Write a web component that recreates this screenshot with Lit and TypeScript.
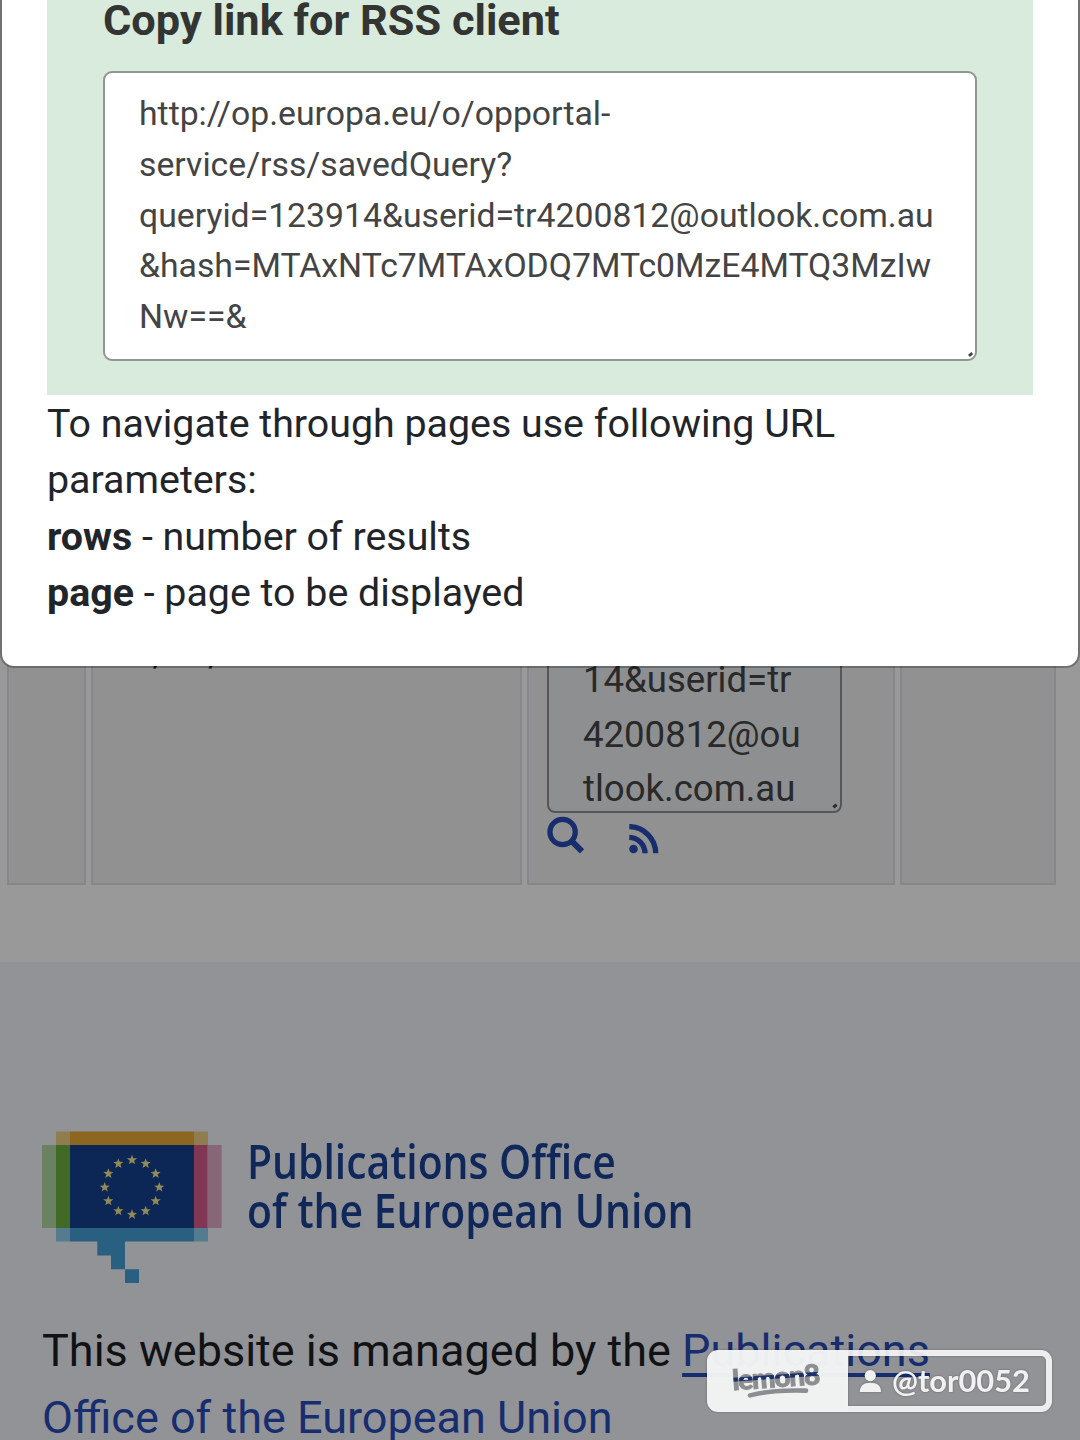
import { LitElement, html, svg, css } from "lit";
import { customElement } from "lit/decorators.js";

@customElement("rss-modal")
export class RssModal extends LitElement {
  static styles = css`
    :host {
      display: block;
      box-sizing: border-box;
      height: 667.5px;
      border: 2px solid rgba(0, 0, 0, 0.26);
      border-top: 0;
      border-radius: 0 0 14px 14px;
      background: #fff;
      background-clip: padding-box;
      color: #212529;
      padding: 0 45px;
      font: 39.36px/56.4px Roboto, sans-serif;
    }
    .panel {
      box-sizing: border-box;
      height: 396px;
      background: linear-gradient(#d9ebdc 395.3px, transparent 395.3px);
      padding: 0 56px;
    }
    .title {
      margin: 0;
      height: 71.4px;
      box-sizing: border-box;
      font-size: 43.3px;
      line-height: 42px;
      font-weight: 700;
      color: #333533;
    }
    .field {
      box-sizing: border-box;
      position: relative;
      height: 290px;
      border: 2px solid #8f9691;
      border-radius: 9px;
      background: #fff;
      padding: 16.1px 34px;
      font-size: 33.75px;
      line-height: 50.6px;
      color: #444;
      white-space: nowrap;
    }
    .grip {
      position: absolute;
      right: 1px;
      bottom: 2px;
      width: 6px;
      height: 5px;
      display: block;
    }
    b { font-weight: 700; }
  `;
  render() {
    return html`
      <div class="panel">
        <h2 class="title">Copy link for RSS client</h2>
        <div class="field">
          <div>http://op.europa.eu/o/opportal-</div>
          <div>service/rss/savedQuery?</div>
          <div>queryid=123914&amp;userid=tr4200812@outlook.com.au</div>
          <div>&amp;hash=MTAxNTc7MTAxODQ7MTc0MzE4MTQ3MzIw</div>
          <div>Nw==&amp;</div>
          <svg class="grip" viewBox="0 0 6 5"><path d="M0.9 3.8L4.3 1.2" stroke="#444" stroke-width="2.8" /></svg>
        </div>
      </div>
      <div>To navigate through pages use following URL<br />parameters:</div>
      <div><b>rows</b> - number of results</div>
      <div><b>page</b> - page to be displayed</div>
    `;
  }
}

@customElement("query-table")
export class QueryTable extends LitElement {
  static styles = css`
    :host {
      display: grid;
      grid-template-columns: 79px 431px 368px 156px;
      column-gap: 5px;
      height: 885px;
      padding-left: 7px;
      box-sizing: border-box;
      font-family: Roboto, sans-serif;
    }
    .cell {
      box-sizing: border-box;
      border: 2px solid #85878a;
      background: #919191;
      display: flex;
      flex-direction: column;
      justify-content: flex-end;
    }
    .date {
      padding: 0 0 202px 19px;
      font-size: 36.2px;
      line-height: 54px;
      color: #111;
      white-space: nowrap;
    }
    .actions-cell { padding: 0 0 28px 18px; }
    .field {
      box-sizing: border-box;
      position: relative;
      width: 295px;
      height: 260px;
      border: 2px solid #555657;
      border-radius: 8px;
      background: #8d8f91;
      padding: 0 34px;
      display: flex;
      flex-direction: column;
      justify-content: flex-end;
      font-size: 36.55px;
      line-height: 54.4px;
      color: #292929;
    }
    .last { margin-bottom: -5.4px; }
    .grip {
      position: absolute;
      right: 2px;
      bottom: 2px;
      width: 6px;
      height: 6px;
    }
    .icons {
      display: flex;
      gap: 44px;
      height: 42px;
      box-sizing: border-box;
      padding-top: 3px;
    }
    .search { width: 38px; height: 38px; }
    .rss { width: 30px; height: 30px; margin-top: 8px; }
  `;
  render() {
    return html`
      <div class="cell"></div>
      <div class="cell"><div class="date">25/06/2025 10:34</div></div>
      <div class="cell actions-cell">
        <div class="field">
          <div>14&amp;userid=tr</div>
          <div>4200812@ou</div>
          <div class="last">tlook.com.au</div>
          <svg class="grip" viewBox="0 0 6 6"><path d="M1.4 4.4L4.6 1.6" stroke="#2c2c2c" stroke-width="3.2" /></svg>
        </div>
        <div class="icons">
          <svg class="search" viewBox="0 0 38 38" fill="none" stroke="#172d6d">
            <circle cx="15.6" cy="16" r="12.7" stroke-width="5.2" />
            <path d="M24 24.4L35 35.4" stroke-width="6" />
          </svg>
          <svg class="rss" viewBox="0 0 30 30" fill="none" stroke="#172d6d" stroke-width="5">
            <circle cx="4.5" cy="25" r="4.3" fill="#172d6d" stroke="none" />
            <path d="M0.3 13.3A16 16 0 0 1 16 29.3" stroke-width="5.3" />
            <path d="M0.3 2.6A26.7 26.7 0 0 1 26.7 29.3" stroke-width="5.3" />
          </svg>
        </div>
      </div>
      <div class="cell"></div>
    `;
  }
}

const starPoints = (cx: number, cy: number, r: number): string =>
  Array.from({ length: 10 }, (_, i) => {
    const radius = i % 2 ? r * 0.42 : r;
    const a = (Math.PI / 5) * i - Math.PI / 2;
    return `${(cx + radius * Math.cos(a)).toFixed(2)},${(cy + radius * Math.sin(a)).toFixed(2)}`;
  }).join(" ");

@customElement("site-footer")
export class SiteFooter extends LitElement {
  static styles = css`
    :host {
      display: block;
      height: 478px;
      box-sizing: border-box;
      background: #929397;
      padding: 169px 42px 0;
      font-family: Roboto, sans-serif;
    }
    .brand { display: flex; gap: 25px; height: 152px; }
    .emblem { width: 180px; height: 152px; flex: none; }
    .name {
      padding-top: 6px;
      font: 600 46.4px/49.4px "Open Sans", "Noto Sans", sans-serif;
      color: #10275a;
      white-space: nowrap;
      transform: scaleX(0.882);
      transform-origin: 0 0;
    }
    .line { display: block; }
    .first { letter-spacing: -0.05px; }
    .text {
      margin: 34px 0 0;
      font-size: 45px;
      line-height: 67px;
      color: #101214;
      white-space: nowrap;
    }
    .text a {
      color: #172d6d;
      text-decoration: underline;
      text-decoration-thickness: 4px;
      text-underline-offset: 7px;
      text-decoration-skip-ink: none;
    }
  `;
  render() {
    const stars = Array.from({ length: 12 }, (_, i) => {
      const a = (Math.PI / 6) * i;
      return svg`<polygon points=${starPoints(90 + 27.3 * Math.sin(a), 56.3 - 27.3 * Math.cos(a), 5.3)} fill="#928b55" />`;
    });
    return html`
      <div class="brand">
        <svg class="emblem" viewBox="0 0 180 152">
          <path d="M14 0.4H28V14H14zM152 0.4H166V14H152z" fill="#8f7d50" />
          <path d="M28 0.4H152V14H28z" fill="#8d6620" />
          <path d="M0 14H14V97H0z" fill="#6a8261" />
          <path d="M14 14H28V97H14z" fill="#426a27" />
          <path d="M28 14H152V97H28z" fill="#0c2655" />
          <path d="M152 14H165.7V97H152z" fill="#813654" />
          <path d="M165.7 14H179.6V97H165.7z" fill="#876678" />
          <path d="M14 97H28V110.6H14zM152 97H166V110.6H152z" fill="#547b8e" />
          <path d="M28 97H152V110.6H83V138.2H69V124.4H55.3V110.6H28zM83 138.2H97V152H83z" fill="#295f80" />
          ${stars}
        </svg>
        <div class="name">
          <span class="line first">Publications Office</span>
          <span class="line">of the European Union</span>
        </div>
      </div>
      <p class="text">
        This website is managed by the <a>Publications<br />Office of the European Union</a>
      </p>
    `;
  }
}

@customElement("author-badge")
export class AuthorBadge extends LitElement {
  static styles = css`
    :host {
      display: flex;
      box-sizing: border-box;
      width: 345px;
      height: 62px;
      filter: drop-shadow(0 0 1px rgba(0, 0, 0, 0.3));
    }
    .brand {
      width: 141px;
      box-sizing: border-box;
      background: rgba(246, 248, 248, 0.96);
      border-radius: 11px 0 0 11px;
      display: flex;
      flex-direction: column;
      padding: 10px 0 0 25px;
    }
    .word {
      width: 94px;
      height: 32px;
      font: 900 28px/32px Lato, sans-serif;
      letter-spacing: -1.2px;
      transform: rotate(-4deg);
      -webkit-text-stroke: 1px transparent;
      color: transparent;
      background: linear-gradient(#8b8d90 14px, #1c2f68 15px, #1c2f68 18px, #8b8d90 19px);
      -webkit-background-clip: text;
      background-clip: text;
    }
    .swoosh { width: 64px; height: 12px; margin: -5px 0 0 14px; }
    .user {
      flex: 1;
      box-sizing: border-box;
      border: 6px solid rgba(255, 255, 255, 0.88);
      border-left: 0;
      border-radius: 0 11px 11px 0;
      display: flex;
      align-items: center;
      padding-left: 11px;
      gap: 10px;
      font: 700 30.8px/40px Lato, "Open Sans", sans-serif;
      color: #f1f1f1;
      white-space: nowrap;
    }
    .person { width: 23px; height: 22px; flex: none; }
  `;
  render() {
    return html`
      <div class="brand">
        <div class="word">lemon8</div>
        <svg class="swoosh" viewBox="0 0 64 12">
          <path d="M4 8.4C20 4 40 3 60 3.6" fill="none" stroke="#8b8d90" stroke-width="4.6" stroke-linecap="round" />
        </svg>
      </div>
      <div class="user">
        <svg class="person" viewBox="0 0 23 22" fill="#f1f1f1">
          <circle cx="11.3" cy="5.6" r="5.6" />
          <path d="M0.8 22C0.8 15.6 4.6 12.8 11.4 12.8S22 15.6 22 22z" />
        </svg>
        <span>@tor0052</span>
      </div>
    `;
  }
}

@customElement("app-root")
export class AppRoot extends LitElement {
  static styles = css`
    :host {
      display: block;
      position: relative;
      width: 1080px;
      height: 1440px;
      overflow: hidden;
      background: #999;
    }
    .page { display: flex; flex-direction: column; gap: 77px; }
    .modal { position: absolute; top: 0; left: 0; right: 0; }
    .badge { position: absolute; left: 707px; top: 1349.5px; }
  `;
  render() {
    return html`
      <div class="page">
        <query-table></query-table>
        <site-footer></site-footer>
      </div>
      <rss-modal class="modal"></rss-modal>
      <author-badge class="badge"></author-badge>
    `;
  }
}
